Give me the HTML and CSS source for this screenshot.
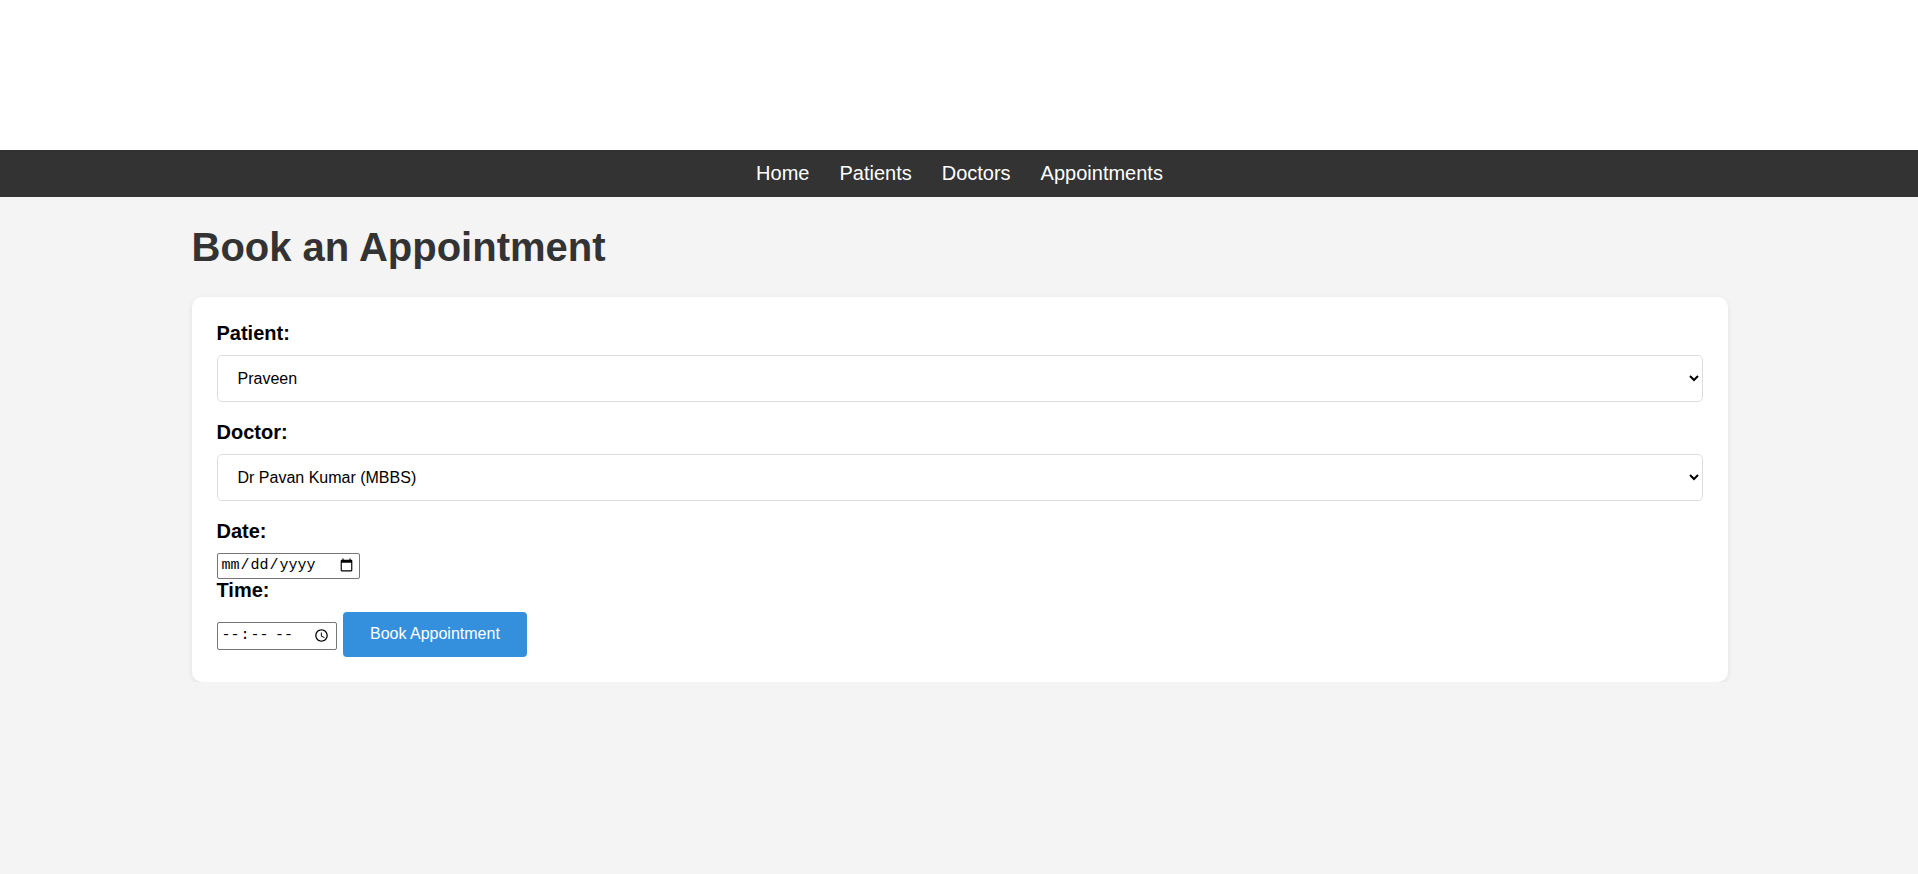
FILE: index.html
```html
<!DOCTYPE html>
<html lang="en">
<head>
<meta charset="utf-8">
<title>Book an Appointment</title>
<link rel="stylesheet" href="styles.css">
</head>
<body>
<header class="top"></header>
<nav class="nav">
  <a href="#">Home</a>
  <a href="#">Patients</a>
  <a href="#">Doctors</a>
  <a href="#">Appointments</a>
</nav>
<main class="container">
  <h1 class="title">Book an Appointment</h1>
  <form class="card">
    <label class="lbl" for="patient">Patient:</label>
    <select class="sel" id="patient"><option>Praveen</option></select>
    <label class="lbl" for="doctor">Doctor:</label>
    <select class="sel" id="doctor"><option>Dr Pavan Kumar (MBBS)</option></select>
    <label class="lbl" for="date">Date:</label>
    <input class="date" type="date" id="date">
    <label class="lbl" for="time">Time:</label>
    <input class="time" type="time" id="time">
    <button class="btn" type="button">Book Appointment</button>
  </form>
</main>
</body>
</html>
```
FILE: styles.css
```css
html, body {
  margin: 0;
  padding: 0;
}
body {
  background: #f4f4f4;
  font-family: "Liberation Sans", Arial, sans-serif;
  font-size: 16px;
  color: #000;
}
.top {
  height: 150px;
  background: #fff;
}
.nav {
  background: #333;
  display: flex;
  justify-content: center;
  gap: 30px;
  padding: 12px 0 12px 1px;
}
.nav a {
  color: #fff;
  text-decoration: none;
  font-size: 20px;
  line-height: 23px;
}
.container {
  width: 1536px;
  margin: 0 auto;
  padding-left: 1px;
}
.title {
  font-size: 40px;
  color: #333;
  margin: 26.8px 0;
  line-height: 46px;
}
.card {
  background: #fff;
  border-radius: 10px;
  padding: 25px;
  box-shadow: 0 2px 6px rgba(0,0,0,0.08);
}
.lbl {
  display: block;
  font-weight: bold;
  font-size: 20px;
  line-height: 23px;
  margin-bottom: 10px;
}
.sel {
  display: block;
  width: 100%;
  height: 47px;
  box-sizing: border-box;
  font-family: "Liberation Sans", Arial, sans-serif;
  font-size: 16px;
  padding: 0 12px 0 16px;
  border: 1px solid #ddd;
  border-radius: 5px;
  background: #fff;
  color: #000;
  margin-bottom: 19px;
}
.date, .time {
  font-family: "Liberation Mono", monospace;
  font-size: 15px;
  box-sizing: border-box;
  border: 1px solid #767676;
  border-radius: 2px;
  padding: 0 3px;
  background: #fff;
  color: #000;
  vertical-align: baseline;
}
.date {
  width: 143px;
  height: 26px;
}
.time {
  width: 120px;
  height: 28px;
}
.btn {
  font-family: "Liberation Sans", Arial, sans-serif;
  font-size: 16px;
  line-height: 18px;
  height: 45px;
  background: #3490dc;
  color: #fff;
  border: none;
  border-radius: 4px;
  padding: 0 27px;
  margin-left: 2px;
  cursor: pointer;
}
```
